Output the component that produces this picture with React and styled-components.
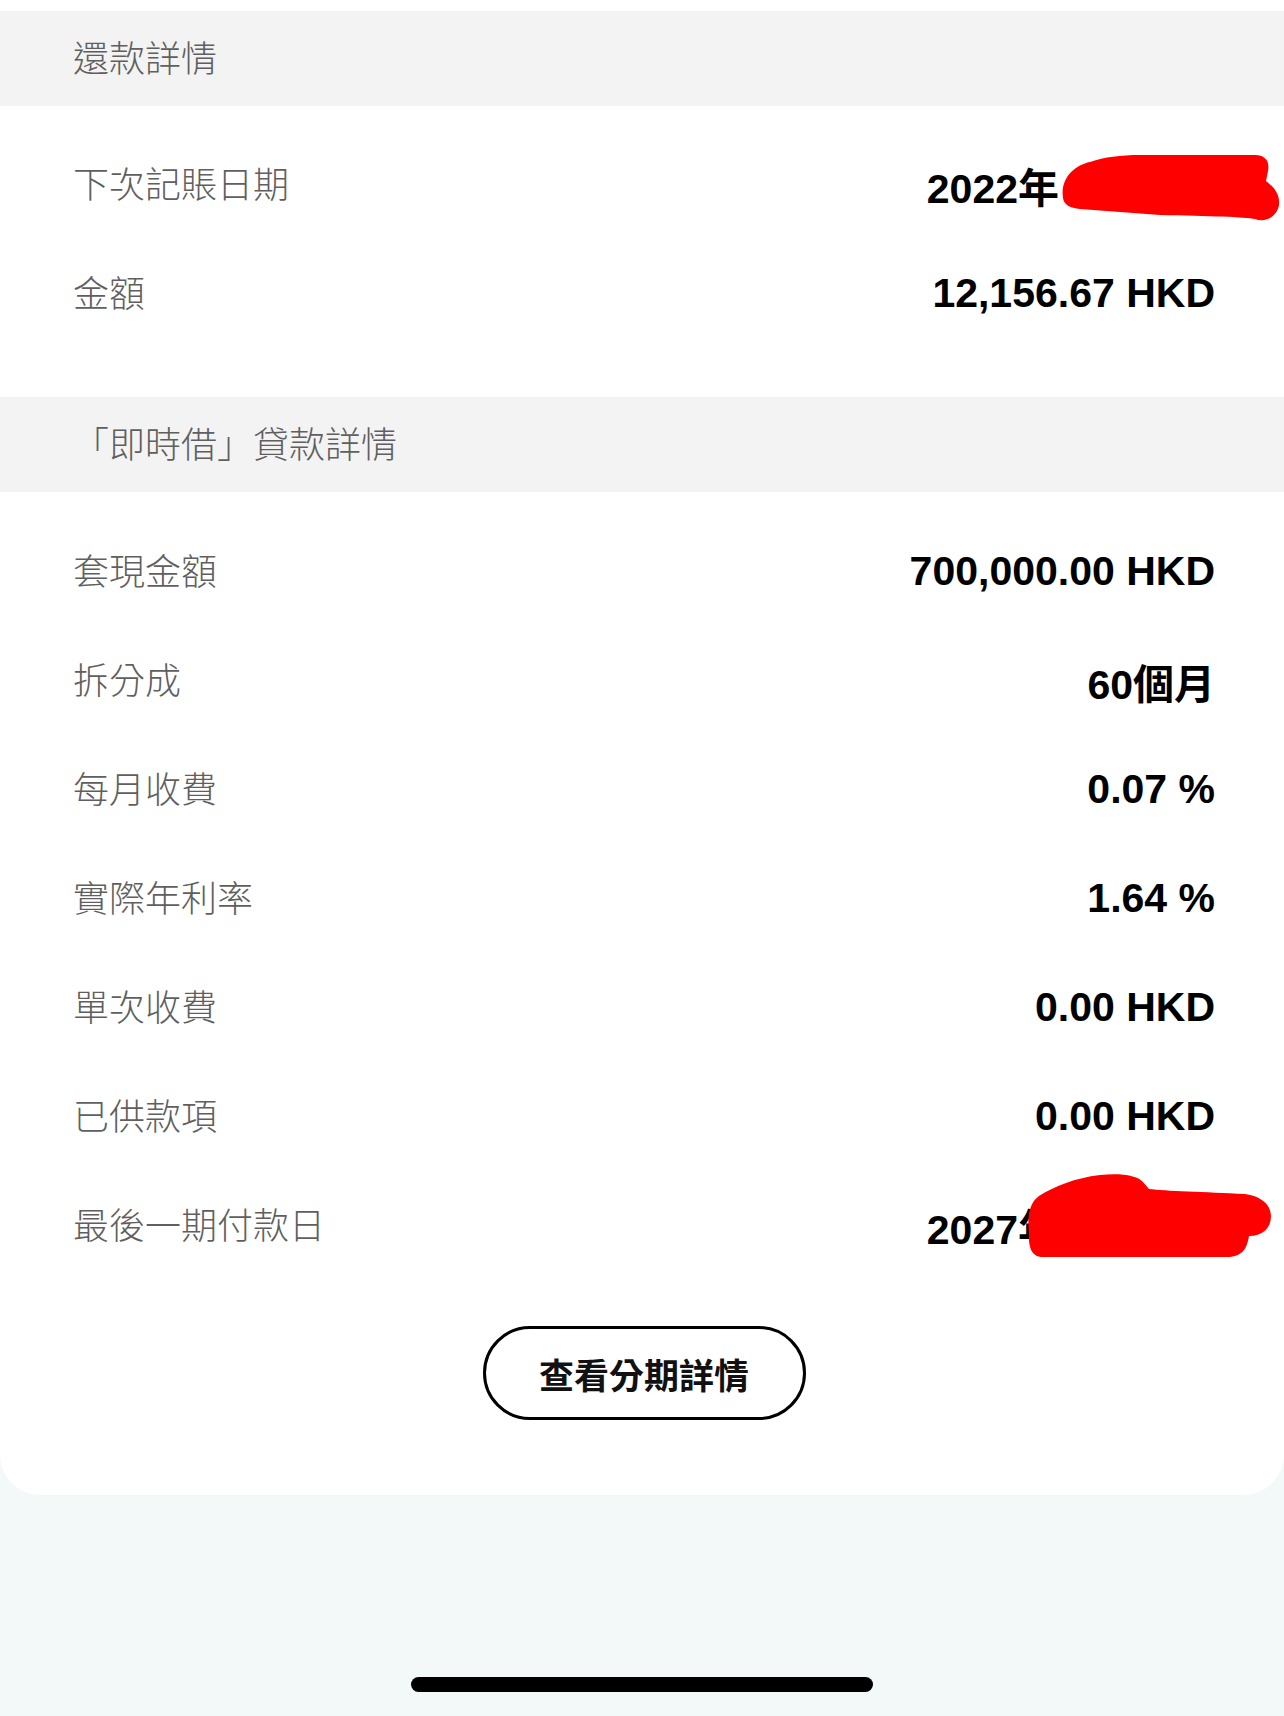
import styled, { createGlobalStyle } from "styled-components";

const GlobalStyle = createGlobalStyle`
  html, body {
    margin: 0;
    padding: 0;
    background: #f3f8f8;
  }
  * {
    box-sizing: border-box;
  }
`;

const repayment = [
  { label: "下次記賬日期", value: "2022年", masked: "first" },
  { label: "金額", value: "12,156.67 HKD" },
];

const loan = [
  { label: "套現金額", value: "700,000.00 HKD" },
  { label: "拆分成", value: "60個月" },
  { label: "每月收費", value: "0.07 %" },
  { label: "實際年利率", value: "1.64 %" },
  { label: "單次收費", value: "0.00 HKD" },
  { label: "已供款項", value: "0.00 HKD" },
  { label: "最後一期付款日", value: "2027年", masked: "last" },
];

function Scribble({ variant }) {
  if (variant === "first") {
    return (
      <Blob $top={26} $right={-65} width="220" height="70" viewBox="0 0 220 70">
        <path
          d="M3 45 C0 25 15 12 30 9 C45 4 60 2 80 2 L195 2 C205 2 210 8 208 18 L206 28 C215 35 220 42 219 52 C217 64 205 70 195 66 C185 64 150 63 100 62 L20 56 C10 55 4 52 3 45 Z"
          fill="#ff0000"
        />
      </Blob>
    );
  }
  return (
    <Blob $top={4} $right={-58} width="248" height="88" viewBox="0 0 248 88">
      <path
        d="M4 60 C2 40 6 30 14 24 C30 14 50 6 75 3 C95 1 112 3 118 10 L124 17 C140 19 180 20 220 22 C235 24 246 32 246 44 C246 56 238 64 224 64 C222 76 218 84 204 85 L18 85 C8 85 3 78 4 60 Z"
        fill="#ff0000"
      />
    </Blob>
  );
}

function Section({ title, rows, first }) {
  return (
    <>
      <SectionHeader>{title}</SectionHeader>
      <SectionBody $first={first}>
        {rows.map((row) => (
          <Row key={row.label}>
            <Label>{row.label}</Label>
            <Value>
              {row.value}
              {row.masked && <Hidden />}
            </Value>
            {row.masked && <Scribble variant={row.masked} />}
          </Row>
        ))}
      </SectionBody>
    </>
  );
}

export default function App() {
  return (
    <Page>
      <GlobalStyle />
      <Card>
        <Section title="還款詳情" rows={repayment} first />
        <Section title="「即時借」貸款詳情" rows={loan} />
        <ButtonWrap>
          <DetailButton>查看分期詳情</DetailButton>
        </ButtonWrap>
      </Card>
      <HomeIndicator />
    </Page>
  );
}

const Page = styled.div`
  display: flex;
  flex-direction: column;
  width: 1284px;
  min-height: 1716px;
  background: #f3f8f8;
  overflow: hidden;
`;

const Card = styled.div`
  display: flex;
  flex-direction: column;
  background: #ffffff;
  padding-top: 11px;
  padding-bottom: 75px;
  border-bottom-left-radius: 40px;
  border-bottom-right-radius: 40px;
`;

const SectionHeader = styled.div`
  display: flex;
  align-items: center;
  height: 95px;
  padding-left: 73px;
  padding-bottom: 5px;
  background: #f3f3f3;
  font-family: "Noto Sans CJK TC", "Noto Sans", sans-serif;
  font-weight: 300;
  font-size: 36px;
  color: #5f5f5f;
`;

const SectionBody = styled.div`
  display: flex;
  flex-direction: column;
  padding: ${(p) => (p.$first ? "21px 69px 52px 73px" : "22px 69px 0 73px")};
`;

const Row = styled.div`
  position: relative;
  display: flex;
  justify-content: space-between;
  align-items: center;
  height: 109px;
`;

const Label = styled.span`
  font-family: "Noto Sans CJK TC", "Noto Sans", sans-serif;
  font-weight: 300;
  font-size: 36px;
  color: #5f5f5f;
`;

const Value = styled.span`
  display: flex;
  align-items: center;
  padding-top: 6px;
  font-family: "Liberation Sans", "Noto Sans CJK TC", sans-serif;
  font-weight: 700;
  font-size: 41px;
  color: #000000;
`;

const Hidden = styled.span`
  display: inline-block;
  width: 156px;
`;

const Blob = styled.svg`
  position: absolute;
  top: ${(p) => p.$top}px;
  right: ${(p) => p.$right}px;
`;

const ButtonWrap = styled.div`
  display: flex;
  justify-content: center;
  padding-top: 49px;
`;

const DetailButton = styled.button`
  width: 323px;
  height: 94px;
  margin-left: 4px;
  border: 3.5px solid #000000;
  border-radius: 47px;
  background: #ffffff;
  font-family: "Noto Sans CJK TC", "Noto Sans", sans-serif;
  font-weight: 700;
  font-size: 35px;
  color: #111111;
  cursor: pointer;
`;

const HomeIndicator = styled.div`
  width: 462px;
  height: 15px;
  margin: auto auto 24px;
  border-radius: 8px;
  background: #000000;
`;
